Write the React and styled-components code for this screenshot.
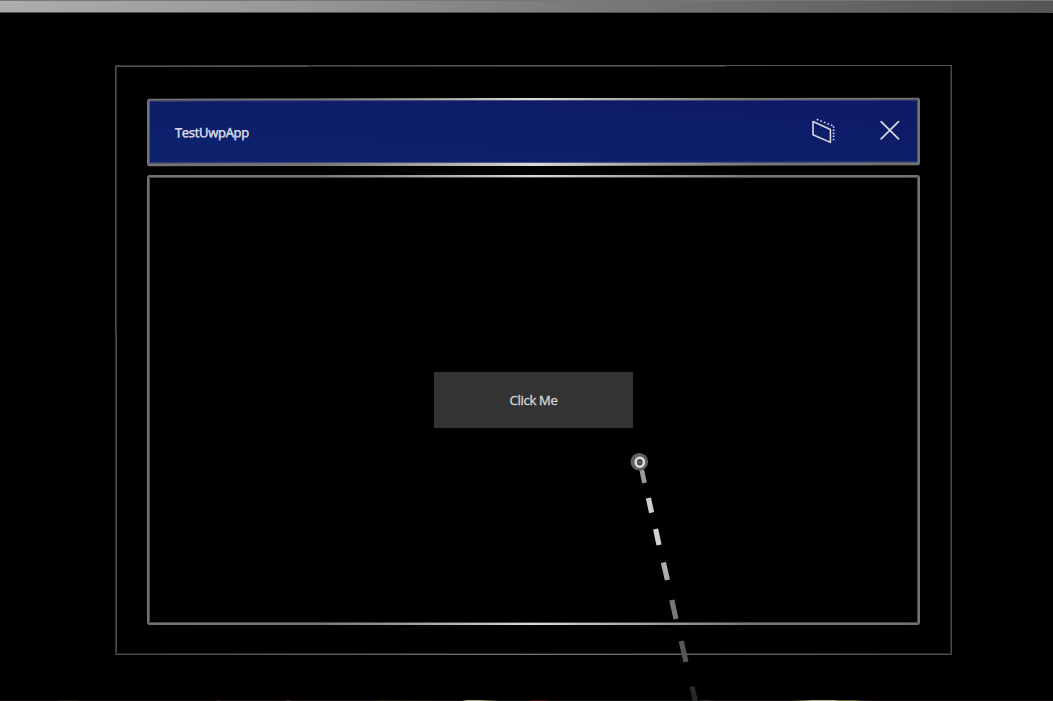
import React from "react";
import styled, { createGlobalStyle } from "styled-components";

const GlobalStyle = createGlobalStyle`
  * { box-sizing: border-box; }
  html, body { margin: 0; background: #000; overflow: hidden; }
`;

const Scene = styled.main`
  position: relative;
  display: flex;
  flex-direction: column;
  width: 1053px;
  height: 701px;
  background: #000;
  font-family: "Open Sans", "Noto Sans", sans-serif;
  overflow: hidden;
`;

const CeilingBar = styled.div`
  flex: none;
  height: 13px;
  border-top: 1px solid #777;
  border-bottom: 1px solid #4b4b4b;
  background: linear-gradient(90deg, #adadad 0%, #979797 28%, #7d7d7d 52%, #656565 80%, #555 100%);
`;

const BoundsFrame = styled.section`
  flex: none;
  display: flex;
  flex-direction: column;
  gap: 9px;
  width: 837px;
  height: 591px;
  margin: 52px 0 0 115px;
  padding: 33px 32px 31px;
  background:
    linear-gradient(#505050, #505050) 0 1px / 192px 1px no-repeat,
    linear-gradient(90deg, #353535, #5c5c5c 50%, #505050) 0 0 / 100% 1px no-repeat,
    linear-gradient(#303030, #303030) 192px 1px / 418px 1px no-repeat,
    linear-gradient(90deg, #444, #757575 50%, #4a4a4a) 0 589px / 100% 1px no-repeat,
    linear-gradient(#292929, #292929) 0 588px / 100% 1px no-repeat,
    linear-gradient(#4d4d4d, #4d4d4d) 0 1px / 1px 268px no-repeat,
    linear-gradient(#303030, #303030) 1px 1px / 1px 268px no-repeat,
    linear-gradient(#303030, #303030) 0 269px / 1px 320px no-repeat,
    linear-gradient(#4d4d4d, #4d4d4d) 1px 269px / 1px 320px no-repeat,
    linear-gradient(#4b4b4b, #4b4b4b) 836px 0 / 1px 590px no-repeat,
    linear-gradient(#202020, #202020) 835px 0 / 1px 590px no-repeat;
`;

const GlowPanel = styled.div`
  border: 2px solid transparent;
  border-radius: 3px;
  background:
    ${(p) => p.$fill} padding-box,
    linear-gradient(90deg, #737373 0%, #777 22%, #a8a8a8 37%, #dcdada 50%, #a8a8a8 63%, #777 78%, #737373 100%) border-box;
  box-shadow: inset 0 0 0 1px ${(p) => p.$edge};
`;

const TitleBar = styled(GlowPanel)`
  flex: none;
  display: flex;
  align-items: center;
  height: 68px;
  padding: 0 18px 0 26px;
  border-bottom-width: 3px;
  transform: skewY(-0.06deg);
`;

const Title = styled.h1`
  flex: 1;
  margin: 0;
  padding-top: 1px;
  color: #dedfe9;
  font-size: 13px;
  font-weight: 400;
  line-height: 18px;
  letter-spacing: -0.3px;
  -webkit-text-stroke: 0.45px currentColor;
`;

const IconButton = styled.button`
  display: flex;
  padding: 0 0 2px;
  border: 0;
  background: none;
  color: #d6d8e4;
  margin-left: ${(p) => p.$gap || "0"};
`;

const ContentPanel = styled(GlowPanel)`
  flex: 1;
  display: flex;
  align-items: center;
  justify-content: center;
`;

const ActionButton = styled.button`
  width: 199px;
  height: 56px;
  padding: 0;
  border: 0;
  background: #333;
  color: #d6d6d6;
  font: 400 13px/18px "Open Sans", "Noto Sans", sans-serif;
  letter-spacing: -0.3px;
  -webkit-text-stroke: 0.35px currentColor;
`;

const PointerRay = styled.svg`
  position: absolute;
  left: 625px;
  top: 448px;
  pointer-events: none;
`;

const FloorEdge = styled.div`
  height: 1px;
  margin-top: auto;
  background: linear-gradient(90deg, #120c0c 0 58px, #241a18 59px 78px, #120c10 79px 216px,
    #302b30 218px, #181214 222px 285px, #3c3c3c 288px, #181214 292px 370px, #292216 380px,
    #171010 440px 462px, #b0ae88 467px 479px, #66622c 487px, #151010 498px 529px,
    #4a1212 532px 544px, #151010 550px 695px, #38342b 706px, #1a1014 715px 790px,
    #55501c 803px, #b5b691 812px 833px, #6a6825 840px 854px, #2d2b2b 862px, #150d13 875px 100%);
`;

const CollapseIcon = () => (
  <svg width="25" height="26" viewBox="0 0 25 26" fill="none" stroke="currentColor">
    <path d="M2 3.8 19.4 11.8V24.7L2 17.1Z" strokeWidth="1.6" strokeLinejoin="round" />
    <path d="M5.8 1.6 21.6 8" strokeWidth="1.5" strokeDasharray="1.7 2.1" />
    <path d="M22.6 8.6V23.4" strokeWidth="1.7" strokeDasharray="1.5 1.6" />
  </svg>
);

const CloseIcon = () => (
  <svg width="20" height="20" viewBox="0 0 20 20" fill="none" stroke="currentColor">
    <path d="M.6.4 19 18.8M19 .4.6 18.8" strokeWidth="1.8" />
  </svg>
);

const dashes = [
  { from: [16.8, 22], to: [19.5, 35], color: "#999", width: 4.8 },
  { from: [23.4, 50], to: [26.6, 64.6], color: "#cfcfcf", width: 5.2 },
  { from: [30.6, 81], to: [34, 97], color: "#d2d2d2", width: 5.2 },
  { from: [38.4, 114.5], to: [42.4, 132], color: "#adadad", width: 5.2 },
  { from: [46.8, 152], to: [51, 171], color: "#777", width: 5.2 },
  { from: [56.2, 193], to: [61, 214], color: "#565656", width: 5.2 },
  { from: [67, 238.5], to: [71, 256], color: "#292929", width: 5.2 },
];

export default function App() {
  return (
    <Scene>
      <GlobalStyle />
      <CeilingBar />
      <BoundsFrame>
        <TitleBar
          $edge="#4c5178"
          $fill="linear-gradient(184deg, #0e1a66 0%, #0d1e69 50%, #0e226d 100%)"
        >
          <Title>TestUwpApp</Title>
          <IconButton aria-label="Collapse">
            <CollapseIcon />
          </IconButton>
          <IconButton aria-label="Close" $gap="44px">
            <CloseIcon />
          </IconButton>
        </TitleBar>
        <ContentPanel $edge="#484848" $fill="linear-gradient(#000, #000)">
          <ActionButton>Click Me</ActionButton>
        </ContentPanel>
      </BoundsFrame>
      <FloorEdge />
      <PointerRay width="90" height="253" viewBox="0 0 90 253">
        {dashes.map((d) => (
          <line
            key={d.from[1]}
            x1={d.from[0]}
            y1={d.from[1]}
            x2={d.to[0]}
            y2={d.to[1]}
            stroke={d.color}
            strokeWidth={d.width}
          />
        ))}
        <circle cx="14.3" cy="13.7" r="8.8" fill="#606060" />
        <ellipse cx="14.8" cy="14.3" rx="4.1" ry="4.5" fill="#444" stroke="#dcdcdc" strokeWidth="2.6" />
        <circle cx="14.8" cy="14.3" r="1.5" fill="#666" />
      </PointerRay>
    </Scene>
  );
}
